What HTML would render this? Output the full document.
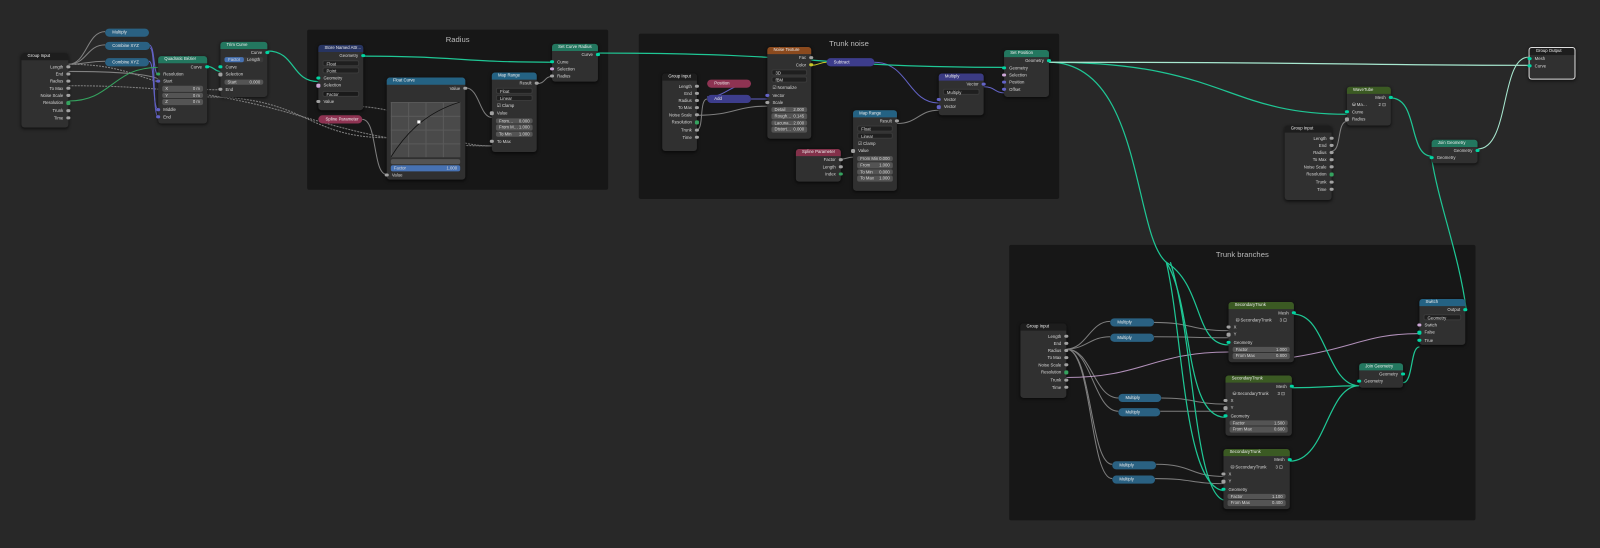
<!DOCTYPE html>
<html><head><meta charset="utf-8"><style>
*{box-sizing:border-box;margin:0;padding:0}
html,body{width:1600px;height:548px;overflow:hidden;background:#282828}
#w{position:absolute;left:0;top:0;width:1568px;height:537px;transform:scale(1.0204);transform-origin:0 0;font-family:"Liberation Sans",sans-serif}
.fr{position:absolute;background:#171717;border-radius:2px}
.ft{position:absolute;width:100%;text-align:center;color:#bbb;font-size:7.5px;top:5px}
.n{position:absolute;background:#303030;border-radius:3px;box-shadow:0 1px 3px #000a;font-size:4.2px;color:#d8d8d8}
.h{height:6.5px;border-radius:3px 3px 0 0;line-height:6.5px;padding-left:6px;color:#eee;white-space:nowrap;overflow:hidden}
.r{height:7.2px;line-height:7.2px;position:relative;padding:0 5px;white-space:nowrap}
.R{text-align:right}
.s{position:absolute;width:3.2px;height:3.2px;border-radius:50%;top:2px;background:#a1a1a1}
.L{left:-1.6px}.O{right:-1.6px}
.g{background:#00d6a3}.v{background:#6363c7}.i{background:#35a35f}.b{background:#cca6d6}.c{background:#c7c729}
.f{margin:1px 4px;height:5.5px;background:#545454;border-radius:2px;line-height:5.5px;padding:0 3px;display:flex;justify-content:space-between;position:relative}
.d{margin:1.5px 4px;height:5.5px;background:#1f1f1f;border-radius:2px;line-height:5.5px;padding:0 3px;border:0.5px solid #3a3a3a}
.p{position:absolute;height:7.5px;border-radius:4px;font-size:4.2px;color:#eee;line-height:7.5px;padding-left:7px}
.pb{background:#2a6182}.pr{background:#8e3352}.pv{background:#3d3d8c}
.hg{background:#23775f}.hb{background:#246283}.hr{background:#83314a}.hv{background:#3b3b83}.ho{background:#8b4a1e}.ha{background:#273461}.hl{background:#3b5a23}.hk{background:#1d1d1d}
</style></head><body><div id="w">
<div class="fr" style="left:301px;top:29px;width:295px;height:157px"><div class="ft">Radius</div></div>
<div class="fr" style="left:626px;top:33px;width:412px;height:162px"><div class="ft">Trunk noise</div></div>
<div class="fr" style="left:989px;top:240px;width:457px;height:270px"><div class="ft">Trunk branches</div></div>

<svg style="position:absolute;left:0;top:0" width="1568" height="537" fill="none" stroke-width="1">
<g stroke="#a1a1a1" opacity=".75">
<path d="M67 63C85 63 85 31 103 31"/><path d="M67 63C85 63 85 44 103 44"/><path d="M67 63C85 63 85 60 103 60"/>
<path d="M67 63C140 63 140 88 216 88" stroke-dasharray="2 1"/>
<path d="M67 70C160 70 160 80 155 80"/>
<path d="M67 84C300 84 300 143 482 143" stroke-dasharray="2 1"/>
<path d="M203 95C300 95 300 135 380 135" stroke-dasharray="2 1"/>
<path d="M355 117C370 117 365 171 379 171"/>
<path d="M340 104C420 104 420 143 482 143" stroke-dasharray="2 1"/>
<path d="M456 86C470 86 470 115 482 115"/>
<path d="M526 82C535 82 533 75 541 75"/>
<path d="M683 113C720 113 720 104 752 104"/>
<path d="M683 127C690 127 685 97 693 97"/>
<path d="M879 121C900 121 900 108 920 108"/>
<path d="M824 156C830 156 830 154 836 154"/>
<path d="M1305 148C1315 148 1310 119 1320 119"/>
<path d="M1045 342C1065 342 1068 315 1088 315"/><path d="M1045 342C1065 342 1068 330 1088 330"/>
<path d="M1045 342C1070 342 1072 390 1096 390"/><path d="M1045 342C1070 342 1072 403 1096 403"/>
<path d="M1045 342C1070 342 1068 455 1090 455"/><path d="M1045 342C1070 342 1068 469 1090 469"/>
<path d="M1131 316C1170 316 1165 324 1204 324"/><path d="M1131 330C1170 330 1165 331 1204 331"/>
<path d="M1138 390C1170 390 1170 396 1201 396"/><path d="M1137 403C1170 403 1170 403 1201 403"/>
<path d="M1133 455C1170 455 1165 467 1201 467"/><path d="M1132 469C1170 469 1165 474 1201 474"/>
</g>
<g stroke="#6363c7">
<path d="M146 44C152 44 150 73 155 73"/><path d="M146 60C152 60 149 107 155 107"/><path d="M147 47C153 47 149 114 155 114"/>
<path d="M736 97C745 97 745 97 752 97"/><path d="M736 82C715 82 712 95 693 95"/>
<path d="M857 61C890 61 890 101 920 101"/><path d="M964 85C975 85 975 91 984 91"/>
</g>
<path d="M795 64C803 64 803 61 810 61" stroke="#c7c729"/>
<path d="M67 99C110 99 110 66 155 66" stroke="#35a35f"/>
<g stroke="#cca6d6" opacity=".85"><path d="M1045 370C1120 370 1130 345 1204 345"/><path d="M1268 350C1330 340 1340 327 1391 327"/></g>
<g stroke="#1fc795" stroke-width="1.2">
<path d="M203 65C210 65 210 70 216 70"/>
<path d="M262 50C290 50 285 80 312 80"/>
<path d="M356 55C450 55 450 61 541 61"/>
<path d="M586 52C800 52 800 66 984 66"/>
<path d="M1028 61C1200 61 1200 112 1320 112"/>
<path d="M1028 61C1120 61 1110 230 1143 257"/>
<path d="M1143 257C1180 280 1170 338 1204 338"/><path d="M1143 257C1170 300 1160 409 1201 409"/><path d="M1143 257C1160 330 1160 481 1201 481"/>
<path d="M1147 257C1170 330 1170 481 1199 490"/>
<path d="M1268 308C1300 308 1300 378 1332 378"/><path d="M1266 380C1300 380 1300 378 1332 378"/><path d="M1264 452C1300 452 1300 378 1332 378"/>
<path d="M1375 375C1385 375 1382 340 1391 340"/>
<path d="M1363 96C1390 96 1380 153 1403 153"/>
<path d="M1437 304C1430 250 1410 200 1403 155"/>
</g>
<path d="M1028 61C1300 61 1350 64 1498 64" stroke="#a8e8d0" stroke-width="1.2"/>
<path d="M1448 146C1480 146 1470 56 1498 56" stroke="#a8e8d0" stroke-width="1"/>
</svg>

<!-- left group input -->
<div class="n" style="left:21px;top:52px;width:46px;height:73px"><div class="h hk">Group Input</div><div style="height:3px"></div>
<div class="r R">Length<i class="s O"></i></div><div class="r R">End<i class="s O"></i></div><div class="r R">Radius<i class="s O"></i></div><div class="r R">To Max<i class="s O"></i></div><div class="r R">Noise Scale<i class="s O"></i></div><div class="r R">Resolution<i class="s O i"></i></div><div class="r R">Trunk<i class="s O"></i></div><div class="r R">Time<i class="s O"></i></div></div>
<div class="p pb" style="left:103px;top:28px;width:43px">Multiply</div>
<div class="p pb" style="left:103px;top:41px;width:44px">Combine XYZ</div>
<div class="p pb" style="left:103px;top:57px;width:43px">Combine XYZ</div>
<div class="n" style="left:155px;top:55px;width:48px;height:66px"><div class="h hg">Quadratic Bézier</div>
<div class="r R">Curve<i class="s O g"></i></div><div class="r"><i class="s L i"></i>Resolution</div><div class="r"><i class="s L v"></i>Start</div>
<div class="f"><span>X</span><span>0 m</span></div><div class="f"><span>Y</span><span>0 m</span></div><div class="f"><span>Z</span><span>0 m</span></div>
<div class="r" style="margin-top:1px"><i class="s L v"></i>Middle</div><div class="r"><i class="s L v"></i>End</div></div>
<div class="n" style="left:216px;top:41px;width:46px;height:54px"><div class="h hg">Trim Curve</div>
<div class="r R">Curve<i class="s O g"></i></div><div class="f" style="background:#3a3a3a;padding:0"><span style="background:#4772b3;width:50%;text-align:center;border-radius:2px">Factor</span><span style="width:50%;text-align:center">Length</span></div>
<div class="r"><i class="s L g"></i>Curve</div><div class="r"><i class="s L"></i>Selection</div><div class="f"><span>Start</span><span>0.000</span></div><div class="r"><i class="s L"></i>End</div></div>

<!-- Radius frame -->
<div class="n" style="left:312px;top:44px;width:44px;height:64px"><div class="h ha">Store Named Attr…</div>
<div class="r R">Geometry<i class="s O g"></i></div><div class="d">Float</div><div class="d">Point</div>
<div class="r"><i class="s L g"></i>Geometry</div><div class="r"><i class="s L b"></i>Selection</div><div class="d" style="background:#1a1a1a">Factor</div><div class="r"><i class="s L"></i>Value</div></div>
<div class="p pr" style="left:312px;top:113px;width:43px">Spline Parameter</div>
<div class="n" style="left:379px;top:76px;width:77px;height:100px"><div class="h hb">Float Curve</div>
<div class="r R">Value<i class="s O"></i></div>
<div style="position:absolute;left:4px;top:24px;width:68px;height:54px;background:#4a4a4a;background-image:linear-gradient(#5a5a5a 1px,transparent 1px),linear-gradient(90deg,#5a5a5a 1px,transparent 1px);background-size:17px 13.5px">
<svg width="68" height="54"><path d="M0 54C15 30 35 10 68 0" stroke="#111" fill="none" stroke-width=".8"/><rect x="26" y="18" width="3" height="3" fill="#fff"/></svg></div>
<div style="position:absolute;left:4px;top:80px;width:68px;height:5px;background:#545454;border-radius:2px"></div>
<div style="position:absolute;left:4px;top:86px;width:68px;height:5.5px;background:#4772b3;border-radius:2px;line-height:5.5px;padding:0 3px">Factor<span style="float:right">1.000</span></div>
<div class="r" style="position:absolute;top:92px;width:100%"><i class="s L"></i>Value</div></div>
<div class="n" style="left:482px;top:71px;width:44px;height:78px"><div class="h hb">Map Range</div>
<div class="r R">Result<i class="s O"></i></div><div class="d">Float</div><div class="d">Linear</div><div class="r">☑ Clamp</div><div class="r"><i class="s L"></i>Value</div>
<div class="f"><span>From…</span><span>0.000</span></div><div class="f"><span>From M…</span><span>1.000</span></div><div class="f"><span>To Min</span><span>1.000</span></div><div class="r"><i class="s L"></i>To Max</div></div>
<div class="n" style="left:541px;top:43px;width:45px;height:37px"><div class="h hg">Set Curve Radius</div>
<div class="r R">Curve<i class="s O g"></i></div><div class="r"><i class="s L g"></i>Curve</div><div class="r"><i class="s L b"></i>Selection</div><div class="r"><i class="s L"></i>Radius</div></div>

<!-- Trunk noise -->
<div class="n" style="left:649px;top:72px;width:34px;height:76px"><div class="h hk">Group Input</div><div style="height:2px"></div>
<div class="r R">Length<i class="s O"></i></div><div class="r R">End<i class="s O"></i></div><div class="r R">Radius<i class="s O"></i></div><div class="r R">To Max<i class="s O"></i></div><div class="r R">Noise Scale<i class="s O"></i></div><div class="r R">Resolution<i class="s O i"></i></div><div class="r R">Trunk<i class="s O"></i></div><div class="r R">Time<i class="s O"></i></div></div>
<div class="p pr" style="left:693px;top:78px;width:43px">Position</div>
<div class="p pv" style="left:693px;top:93px;width:43px">Add</div>
<div class="n" style="left:752px;top:46px;width:43px;height:90px"><div class="h ho">Noise Texture</div>
<div class="r R">Fac<i class="s O"></i></div><div class="r R">Color<i class="s O c"></i></div><div class="d">3D</div><div class="d">fBM</div><div class="r">☑ Normalize</div>
<div class="r"><i class="s L v"></i>Vector</div><div class="r"><i class="s L"></i>Scale</div>
<div class="f"><span>Detail</span><span>2.000</span></div><div class="f"><span>Rough…</span><span>0.145</span></div><div class="f"><span>Lacuna…</span><span>2.000</span></div><div class="f"><span>Distort…</span><span>0.000</span></div></div>
<div class="p pv" style="left:810px;top:57px;width:47px">Subtract</div>
<div class="n" style="left:780px;top:146px;width:44px;height:32px"><div class="h hr">Spline Parameter</div>
<div class="r R">Factor<i class="s O"></i></div><div class="r R">Length<i class="s O"></i></div><div class="r R">Index<i class="s O i"></i></div></div>
<div class="n" style="left:836px;top:108px;width:43px;height:79px"><div class="h hb">Map Range</div>
<div class="r R">Result<i class="s O"></i></div><div class="d">Float</div><div class="d">Linear</div><div class="r">☑ Clamp</div><div class="r"><i class="s L"></i>Value</div>
<div class="f"><span>From Min</span><span>0.000</span></div><div class="f"><span>From M…</span><span>1.000</span></div><div class="f"><span>To Min</span><span>0.000</span></div><div class="f"><span>To Max</span><span>1.000</span></div></div>
<div class="n" style="left:920px;top:72px;width:44px;height:41px"><div class="h hv">Multiply</div>
<div class="r R">Vector<i class="s O v"></i></div><div class="d">Multiply</div><div class="r"><i class="s L v"></i>Vector</div><div class="r"><i class="s L v"></i>Vector</div></div>
<div class="n" style="left:984px;top:49px;width:44px;height:46px"><div class="h hg">Set Position</div>
<div class="r R">Geometry<i class="s O g"></i></div><div class="r"><i class="s L g"></i>Geometry</div><div class="r"><i class="s L b"></i>Selection</div><div class="r"><i class="s L v"></i>Position</div><div class="r"><i class="s L v"></i>Offset</div></div>

<!-- right top -->
<div class="n" style="left:1320px;top:85px;width:43px;height:38px"><div class="h hl">WaveTube</div>
<div class="r R">Mesh<i class="s O g"></i></div><div class="f" style="background:#303030;padding:0 1px"><span>⛁ Ma…</span><span>2 ⊡</span></div>
<div class="r"><i class="s L g"></i>Curve</div><div class="r"><i class="s L"></i>Radius</div></div>
<div class="n" style="left:1259px;top:123px;width:46px;height:73px"><div class="h hk">Group Input</div><div style="height:2px"></div>
<div class="r R">Length<i class="s O"></i></div><div class="r R">End<i class="s O"></i></div><div class="r R">Radius<i class="s O"></i></div><div class="r R">To Max<i class="s O"></i></div><div class="r R">Noise Scale<i class="s O"></i></div><div class="r R">Resolution<i class="s O i"></i></div><div class="r R">Trunk<i class="s O"></i></div><div class="r R">Time<i class="s O"></i></div></div>
<div class="n" style="left:1403px;top:137px;width:45px;height:23px"><div class="h hg">Join Geometry</div>
<div class="r R">Geometry<i class="s O g"></i></div><div class="r"><i class="s L g"></i>Geometry</div></div>
<div class="n" style="left:1498px;top:46px;width:46px;height:32px;border:1px solid #ddd"><div class="h hk">Group Output</div>
<div class="r"><i class="s L g"></i>Mesh</div><div class="r"><i class="s L g"></i>Curve</div></div>

<!-- Trunk branches -->
<div class="n" style="left:1000px;top:317px;width:45px;height:73px"><div class="h hk">Group Input</div><div style="height:2px"></div>
<div class="r R">Length<i class="s O"></i></div><div class="r R">End<i class="s O"></i></div><div class="r R">Radius<i class="s O"></i></div><div class="r R">To Max<i class="s O"></i></div><div class="r R">Noise Scale<i class="s O"></i></div><div class="r R">Resolution<i class="s O i"></i></div><div class="r R">Trunk<i class="s O"></i></div><div class="r R">Time<i class="s O"></i></div></div>
<div class="p pb" style="left:1088px;top:312px;width:43px">Multiply</div>
<div class="p pb" style="left:1088px;top:327px;width:43px">Multiply</div>
<div class="p pb" style="left:1096px;top:386px;width:42px">Multiply</div>
<div class="p pb" style="left:1096px;top:400px;width:41px">Multiply</div>
<div class="p pb" style="left:1090px;top:452px;width:43px">Multiply</div>
<div class="p pb" style="left:1090px;top:466px;width:42px">Multiply</div>

<div class="n" style="left:1204px;top:296px;width:64px;height:59px"><div class="h hl">SecondaryTrunk</div>
<div class="r R">Mesh<i class="s O g"></i></div><div class="f" style="background:#303030"><span>⛁ SecondaryTrunk</span><span>3 ⊡</span></div>
<div class="r"><i class="s L"></i>X</div><div class="r"><i class="s L"></i>Y</div><div class="r"><i class="s L g"></i>Geometry</div>
<div class="f"><span>Factor</span><span>1.000</span></div><div class="f"><span>From Max</span><span>0.800</span></div></div>
<div class="n" style="left:1201px;top:368px;width:65px;height:59px"><div class="h hl">SecondaryTrunk</div>
<div class="r R">Mesh<i class="s O g"></i></div><div class="f" style="background:#303030"><span>⛁ SecondaryTrunk</span><span>3 ⊡</span></div>
<div class="r"><i class="s L"></i>X</div><div class="r"><i class="s L"></i>Y</div><div class="r"><i class="s L g"></i>Geometry</div>
<div class="f"><span>Factor</span><span>1.500</span></div><div class="f"><span>From Max</span><span>0.600</span></div></div>
<div class="n" style="left:1199px;top:440px;width:65px;height:59px"><div class="h hl">SecondaryTrunk</div>
<div class="r R">Mesh<i class="s O g"></i></div><div class="f" style="background:#303030"><span>⛁ SecondaryTrunk</span><span>3 ⊡</span></div>
<div class="r"><i class="s L"></i>X</div><div class="r"><i class="s L"></i>Y</div><div class="r"><i class="s L g"></i>Geometry</div>
<div class="f"><span>Factor</span><span>1.100</span></div><div class="f"><span>From Max</span><span>0.400</span></div></div>
<div class="n" style="left:1332px;top:356px;width:43px;height:24px"><div class="h hg">Join Geometry</div>
<div class="r R">Geometry<i class="s O g"></i></div><div class="r"><i class="s L g"></i>Geometry</div></div>
<div class="n" style="left:1391px;top:293px;width:45px;height:45px"><div class="h hb">Switch</div>
<div class="r R">Output<i class="s O g"></i></div><div class="d">Geometry</div><div class="r"><i class="s L b"></i>Switch</div><div class="r"><i class="s L g"></i>False</div><div class="r"><i class="s L g"></i>True</div></div>
</div></body></html>
